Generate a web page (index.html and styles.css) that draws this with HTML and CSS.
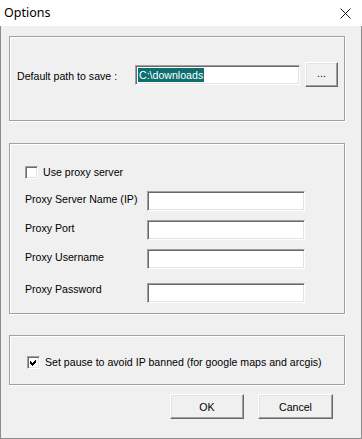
FILE: index.html
```html
<!DOCTYPE html>
<html lang="en">
<head>
    <meta charset="UTF-8">
    <title>Options</title>
    <link rel="stylesheet" href="styles.css">
</head>
<body>
    <div class="window">
        <!-- Barra de título -->
        <div class="titlebar">
            <span class="title">Options</span>
            <svg class="close" width="11" height="11" viewBox="0 0 11 11">
                <path d="M0.5 0.5 L10.5 10.5 M10.5 0.5 L0.5 10.5" stroke="#1a1a1a" stroke-width="1" fill="none"/>
            </svg>
        </div>

        <div class="client">
            <!-- Ruta por defecto -->
            <div class="group group-path">
                <div class="path-row">
                    <span class="path-label">Default path to save :</span>
                    <div class="textbox textbox-path"><span class="sel">C:\downloads</span></div>
                    <button class="btn btn-browse">...</button>
                </div>
            </div>

            <!-- Proxy -->
            <div class="group group-proxy">
                <div class="check-row">
                    <span class="checkbox"></span>
                    <span>Use proxy server</span>
                </div>
                <div class="field-row">
                    <span class="field-label">Proxy Server Name (IP)</span>
                    <span class="textbox textbox-field"></span>
                </div>
                <div class="field-row">
                    <span class="field-label">Proxy Port</span>
                    <span class="textbox textbox-field"></span>
                </div>
                <div class="field-row">
                    <span class="field-label">Proxy Username</span>
                    <span class="textbox textbox-field"></span>
                </div>
                <div class="field-row field-row-last">
                    <span class="field-label">Proxy Password</span>
                    <span class="textbox textbox-field"></span>
                </div>
            </div>

            <!-- Pausa -->
            <div class="group group-pause">
                <div class="check-row">
                    <span class="checkbox">
                        <svg width="9" height="9" viewBox="0 0 9 9">
                            <polygon points="1,3 3,5 7,1 7,4 3,8 1,6" fill="#000"/>
                        </svg>
                    </span>
                    <span>Set pause to avoid IP banned (for google maps and arcgis)</span>
                </div>
            </div>

            <!-- Botones -->
            <div class="buttons">
                <button class="btn btn-ok">OK</button>
                <button class="btn btn-cancel">Cancel</button>
            </div>
        </div>
    </div>
</body>
</html>
```

FILE: styles.css
```css
/* Reset básico */
* {
    margin: 0;
    padding: 0;
    box-sizing: border-box;
}

body {
    width: 362px;
    height: 439px;
    overflow: hidden;
    background-color: #ffffff;
    font-family: 'Liberation Sans', Arial, sans-serif;
    font-size: 10.6px;
    color: #000000;
}

/* Barra de título */
.titlebar {
    height: 26px;
    background-color: #ffffff;
    display: flex;
    align-items: center;
    justify-content: space-between;
    padding: 0 11px 0 4px;
}

.title {
    font-family: 'Noto Sans', sans-serif;
    font-size: 12.5px;
    color: #000000;
    line-height: 16px;
}

.close {
    display: block;
}

/* Área cliente */
.client {
    height: 413px;
    background-color: #f0f0f0;
    border: 1px solid #8c8c8c;
    border-top: none;
    padding: 10px 0 0 8px;
}

/* Grupos */
.group {
    width: 336px;
    border: 1px solid #a0a0a0;
    box-shadow: inset 1px 1px 0 #ffffff, 1px 1px 0 #ffffff;
}

.group-path {
    height: 85px;
    padding: 25px 0 0 7px;
}

.group-proxy {
    height: 171px;
    margin-top: 22px;
    padding: 22px 0 0 15px;
}

.group-pause {
    height: 50px;
    margin-top: 21px;
    padding: 20px 0 0 17px;
}

/* Fila de ruta */
.path-row {
    display: flex;
    align-items: center;
    height: 25px;
}

.path-label {
    width: 118px;
    line-height: 13px;
    padding-top: 4px;
}

/* Cajas de texto */
.textbox {
    display: block;
    height: 20px;
    background-color: #ffffff;
    border-top: 1px solid #a0a0a0;
    border-left: 1px solid #a0a0a0;
    border-bottom: 1px solid #ffffff;
    border-right: 1px solid #ffffff;
    box-shadow: inset 1px 1px 0 #696969, inset -1px -1px 0 #e3e3e3;
}

.textbox-path {
    width: 165px;
    padding: 2px 0 0 2px;
}

.sel {
    display: inline-block;
    background-color: #0d6e6e;
    color: #ffffff;
    line-height: 14px;
    padding: 0 1px;
}

.textbox-field {
    width: 158px;
}

/* Botones */
.btn {
    font-family: 'Liberation Sans', Arial, sans-serif;
    font-size: 10.6px;
    color: #000000;
    background-color: #f0f0f0;
    height: 25px;
    border: 1px solid;
    border-color: #ffffff #696969 #696969 #ffffff;
    box-shadow: inset -1px -1px 0 #a0a0a0, inset 1px 1px 0 #e3e3e3;
    cursor: pointer;
}

.btn-browse {
    width: 33px;
    margin-left: 5px;
    padding-bottom: 4px;
}

.buttons {
    width: 337px;
    display: flex;
    justify-content: flex-end;
    gap: 14px;
    margin-top: 9px;
    padding-right: 13px;
}

.btn-ok {
    width: 74px;
}

.btn-cancel {
    width: 75px;
}

/* Casillas */
.check-row {
    display: flex;
    align-items: center;
    gap: 5px;
    height: 13px;
    line-height: 13px;
}

.checkbox {
    width: 13px;
    height: 13px;
    background-color: #ffffff;
    border-top: 1px solid #a0a0a0;
    border-left: 1px solid #a0a0a0;
    border-bottom: 1px solid #ffffff;
    border-right: 1px solid #ffffff;
    box-shadow: inset 1px 1px 0 #696969, inset -1px -1px 0 #e3e3e3;
    padding: 1px 0 0 1px;
}

.checkbox svg {
    display: block;
    shape-rendering: crispEdges;
}

/* Campos del proxy */
.field-row {
    display: flex;
    align-items: flex-start;
    margin-top: 9px;
}

.group-proxy .check-row + .field-row {
    margin-top: 12px;
}

.field-row-last {
    margin-top: 14px;
}

.field-label {
    width: 122px;
    line-height: 13px;
    padding-top: 2px;
}

.field-row-last .field-label {
    padding-top: 0;
}
```
